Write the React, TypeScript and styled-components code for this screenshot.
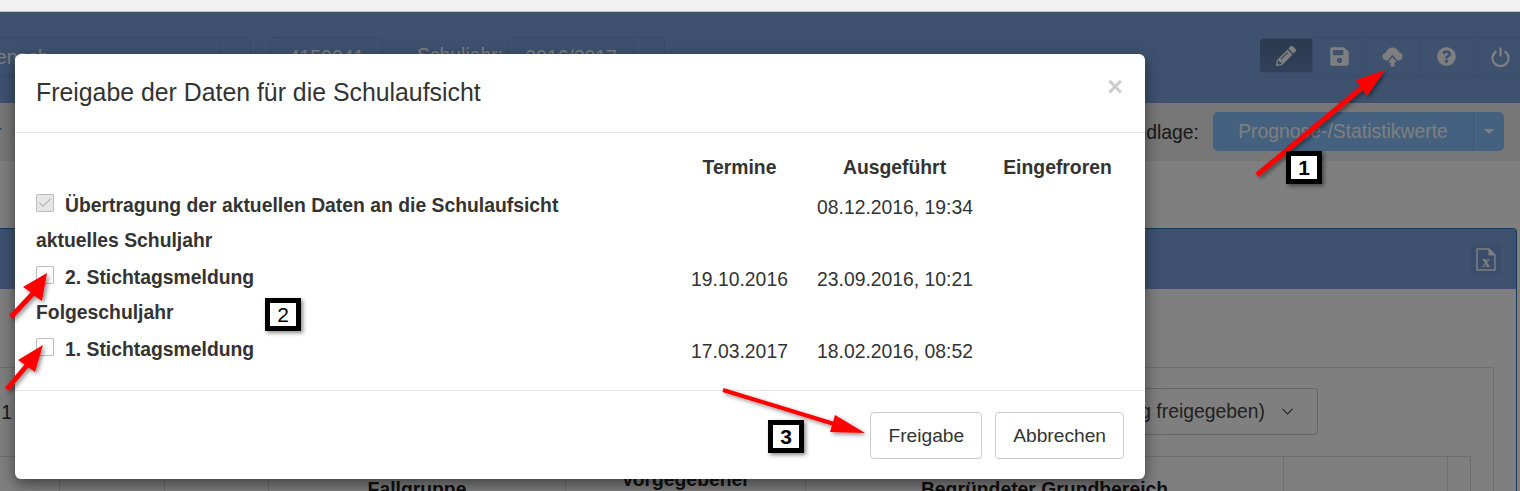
import { Check, ChevronDown } from "lucide-react";
import { FaPencilAlt, FaQuestionCircle, FaSave } from "react-icons/fa";
import styled, { createGlobalStyle } from "styled-components";

const GlobalStyle = createGlobalStyle`
  html, body {
    margin: 0;
    padding: 0;
    background: #ffffff;
    overflow: hidden;
  }
  * {
    box-sizing: border-box;
  }
  body {
    font-family: "Liberation Sans", Arial, sans-serif;
    font-size: 19.35px;
    color: #333333;
  }
`;

const rows = [
  { kind: "check", label: "Übertragung der aktuellen Daten an die Schulaufsicht", date: "", done: "08.12.2016, 19:34", checked: true },
  { kind: "group", label: "aktuelles Schuljahr" },
  { kind: "check", label: "2. Stichtagsmeldung", date: "19.10.2016", done: "23.09.2016, 10:21", checked: false },
  { kind: "group", label: "Folgeschuljahr" },
  { kind: "check", label: "1. Stichtagsmeldung", date: "17.03.2017", done: "18.02.2016, 08:52", checked: false },
];

type Pt = [number, number];

const arrows: { tail: Pt; tip: Pt; wingA: Pt; wingB: Pt; width: number }[] = [
  { tail: [1257, 175], tip: [1385, 70], wingA: [1356, 80], wingB: [1367, 96], width: 5 },
  { tail: [11, 317], tip: [47, 273], wingA: [23, 287], wingB: [42, 301], width: 5 },
  { tail: [7, 389], tip: [43, 345], wingA: [18, 360], wingB: [35, 372], width: 5 },
  { tail: [723, 390], tip: [865, 433], wingA: [835, 415], wingB: [830, 432], width: 4 },
];

// shaft plus head, the shaft ends on the middle of the two wing points
function arrowPoints({ tail, tip, wingA, wingB, width }: (typeof arrows)[number]) {
  const base: Pt = [(wingA[0] + wingB[0]) / 2, (wingA[1] + wingB[1]) / 2];
  const dx = base[0] - tail[0];
  const dy = base[1] - tail[1];
  const len = Math.hypot(dx, dy);
  const ox = (-dy / len) * (width / 2);
  const oy = (dx / len) * (width / 2);
  const side = (wingB[0] - base[0]) * ox + (wingB[1] - base[1]) * oy > 0 ? 1 : -1;
  const list: Pt[] = [
    [tail[0] - ox * side, tail[1] - oy * side],
    [base[0] - ox * side, base[1] - oy * side],
    wingA,
    tip,
    wingB,
    [base[0] + ox * side, base[1] + oy * side],
    [tail[0] + ox * side, tail[1] + oy * side],
  ];
  return list.map((p) => p.join(",")).join(" ");
}

export default function App() {
  return (
    <>
      <GlobalStyle />
      <BrowserStrip />
      <Frame>
        <Navbar>
          <NavField $width={293} $offset={-42}>
            <NavValue>Eisenach</NavValue>
            <NavAddon />
          </NavField>
          <NavField $width={113} $offset={19}>
            <NavValue $center>4150041</NavValue>
          </NavField>
          <NavLabel>Schuljahr:</NavLabel>
          <NavField $width={157} $offset={0}>
            <NavValue $center>2016/2017</NavValue>
            <NavAddon />
          </NavField>
          <Toolbar>
            <ToolButton $active>
              <FaPencilAlt size={20} />
            </ToolButton>
            <ToolButton>
              <FaSave size={21} />
            </ToolButton>
            <ToolButton>
              <CloudUp />
            </ToolButton>
            <ToolButton>
              <FaQuestionCircle size={19} />
            </ToolButton>
            <ToolButton $last>
              <PowerIcon />
            </ToolButton>
          </Toolbar>
        </Navbar>
        <SubBar>
          <BackLink>r</BackLink>
          <SubLabel>Datengrundlage:</SubLabel>
          <SplitButton>
            <SplitMain>Prognose-/Statistikwerte</SplitMain>
            <SplitCaret>
              <Caret />
            </SplitCaret>
          </SplitButton>
        </SubBar>
        <Content>
          <Panel>
            <PanelHead>
              <ExportButton>
                <FileX />
              </ExportButton>
            </PanelHead>
            <PanelBody>
              <InnerBox>
                <FilterRow>
                  <RowNumber>1.1</RowNumber>
                  <SelectBox>
                    <span>Prognose (noch nicht endgültig freigegeben)</span>
                    <ChevronDown size={19} strokeWidth={1.4} />
                  </SelectBox>
                </FilterRow>
                <GridHead>
                  <HeadCell />
                  <HeadCell />
                  <HeadCell />
                  <HeadCell>Fallgruppe</HeadCell>
                  <HeadCell $raise>Vorgegebener</HeadCell>
                  <HeadCell>Begründeter Grundbereich</HeadCell>
                  <HeadCell />
                  <HeadCell />
                </GridHead>
              </InnerBox>
            </PanelBody>
          </Panel>
        </Content>
        <Backdrop />
        <Modal>
          <ModalHeader>
            <ModalTitle>Freigabe der Daten für die Schulaufsicht</ModalTitle>
            <CloseMark>×</CloseMark>
          </ModalHeader>
          <ModalBody>
            <ReleaseRow>
              <span />
              <ColumnTitle>Termine</ColumnTitle>
              <ColumnTitle>Ausgeführt</ColumnTitle>
              <ColumnTitle>Eingefroren</ColumnTitle>
            </ReleaseRow>
            {rows.map((row) =>
              row.kind === "group" ? (
                <GroupTitle key={row.label}>{row.label}</GroupTitle>
              ) : (
                <ReleaseRow key={row.label}>
                  <CheckLabel>
                    <CheckBox $checked={row.checked}>
                      {row.checked && <Check size={16} strokeWidth={1.5} />}
                    </CheckBox>
                    {row.label}
                  </CheckLabel>
                  <DateCell>{row.date}</DateCell>
                  <DateCell>{row.done}</DateCell>
                  <span />
                </ReleaseRow>
              )
            )}
          </ModalBody>
          <ModalFooter>
            <FooterButton>Freigabe</FooterButton>
            <FooterButton>Abbrechen</FooterButton>
          </ModalFooter>
        </Modal>
      </Frame>
      <ArrowLayer viewBox="0 0 1520 491">
        <defs>
          <filter id="arrowShadow" x="-20%" y="-20%" width="150%" height="150%">
            <feDropShadow dx="2" dy="2" stdDeviation="2" floodColor="#000" floodOpacity="0.45" />
          </filter>
        </defs>
        {arrows.map((arrow) => (
          <polygon key={arrow.tail.join()} points={arrowPoints(arrow)} fill="#ff0000" filter="url(#arrowShadow)" />
        ))}
      </ArrowLayer>
      <Marker $left={1286} $top={151}>1</Marker>
      <Marker $left={265} $top={298} $light>2</Marker>
      <Marker $left={768} $top={420}>3</Marker>
    </>
  );
}

function CloudUp() {
  return (
    <svg width="21" height="20" viewBox="0 0 21 20">
      <path
        d="M5 13.5C2.3 13.5 0.4 11.8 0.4 9.6 0.4 7.5 2 6 4 5.8 4.8 2.6 7.4 0.6 10.5 0.6c3 0 5.4 1.7 6.3 4.6 2.2 0.3 3.8 2 3.8 4.2 0 2.3-1.8 4.1-4.6 4.1H15.5L10.5 7.8 5.5 13.5z"
        fill="currentColor"
      />
      <path d="M10.5 10.2 15.2 15.2H12.4V19.6H8.6V15.2H5.8z" fill="currentColor" />
    </svg>
  );
}

function PowerIcon() {
  return (
    <svg width="19" height="20" viewBox="0 0 19 20" fill="none" stroke="currentColor" strokeWidth="2.2">
      <path d="M5.4 4.2A8 8 0 1 0 13.6 4.2" />
      <path d="M9.5 0.5V9.5" />
    </svg>
  );
}

function FileX() {
  return (
    <svg width="20" height="23" viewBox="0 0 20 23">
      <path d="M1 1H13L19 7V22H1z" fill="none" stroke="currentColor" strokeWidth="1.4" />
      <path d="M12.5 1V7.5H19z" fill="currentColor" />
      <text x="10" y="19" textAnchor="middle" fontSize="16" fontWeight="700" fontFamily="Liberation Serif, serif" fill="currentColor">
        x
      </text>
    </svg>
  );
}

const BrowserStrip = styled.div`
  position: relative;
  z-index: 5;
  height: 12px;
  background: #f1f1f1;
  border-bottom: 1px solid #c4c4c4;
`;

const Frame = styled.div`
  position: relative;
  height: 479px;
  overflow: hidden;
  background: #ffffff;
`;

const Navbar = styled.div`
  display: flex;
  align-items: flex-start;
  height: 91px;
  padding-top: 25px;
  background: #7ca4e0;
  color: #ffffff;
`;

const NavField = styled.div<{ $width: number; $offset: number }>`
  display: flex;
  flex: none;
  width: ${({ $width }) => $width}px;
  height: 40px;
  margin-left: ${({ $offset }) => $offset}px;
  border: 1px solid #7097d0;
  border-radius: 4px;
`;

const NavValue = styled.div<{ $center?: boolean }>`
  flex: 1;
  padding: 8px 10px;
  line-height: 22px;
  color: #ffffff;
  text-align: ${({ $center }) => ($center ? "center" : "left")};
`;

const NavAddon = styled.div`
  flex: none;
  width: 31px;
  border-left: 1px solid #7097d0;
`;

const NavLabel = styled.div`
  flex: none;
  margin: 7px 5px 0 34px;
  line-height: 22px;
  color: #ffffff;
`;

const Toolbar = styled.div`
  display: flex;
  flex: none;
  margin-left: auto;
  margin-right: -7px;
  height: 39px;
`;

const ToolButton = styled.div<{ $active?: boolean; $last?: boolean }>`
  display: flex;
  align-items: center;
  justify-content: center;
  flex: none;
  width: 53.5px;
  height: ${({ $active }) => ($active ? "35px" : "39px")};
  margin-top: ${({ $active }) => ($active ? "1px" : "0")};
  padding-left: ${({ $last }) => ($last ? "2px" : "0")};
  border: 1px solid #7097d0;
  border-left: none;
  border-radius: ${({ $active }) => ($active ? "4px 0 0 4px" : "0")};
  background: ${({ $active }) => ($active ? "linear-gradient(180deg, #58749f, #6483b4)" : "transparent")};
  color: #ffffff;
`;

const SubBar = styled.div`
  display: flex;
  align-items: center;
  height: 58px;
  padding: 0 16px 0 0;
  background: #eeeeee;
`;

const BackLink = styled.span`
  color: #3f7fc4;
  margin-left: -5px;
`;

const SubLabel = styled.span`
  margin-left: auto;
  margin-right: 14px;
  color: #333333;
`;

const SplitButton = styled.div`
  display: flex;
  width: 291px;
  height: 39px;
  margin-top: -1px;
  border-radius: 5px;
  overflow: hidden;
  background: #88c2ff;
  color: #ffffff;
`;

const SplitMain = styled.div`
  display: flex;
  flex: 1;
  align-items: center;
  justify-content: center;
`;

const SplitCaret = styled.div`
  display: flex;
  align-items: center;
  justify-content: center;
  width: 31px;
  border-left: 1px solid #7ca8e8;
`;

const Caret = styled.span`
  width: 0;
  height: 0;
  border-left: 5px solid transparent;
  border-right: 5px solid transparent;
  border-top: 5px solid #ffffff;
`;

const Content = styled.div`
  padding: 67px 3px 0 0;
  background: #ffffff;
`;

const Panel = styled.div`
  border: 1px solid #2f6fa8;
  border-width: 1px 1px 0 0;
  border-radius: 0 4px 0 0;
`;

const PanelHead = styled.div`
  display: flex;
  align-items: flex-start;
  justify-content: flex-end;
  height: 60px;
  padding: 16px 15px 0 0;
  background: #7ca4e0;
`;

const ExportButton = styled.div`
  display: flex;
  align-items: center;
  justify-content: center;
  width: 30px;
  height: 29px;
  border-radius: 4px;
  background: #759cd6;
  color: #ffffff;
`;

const PanelBody = styled.div`
  padding: 78px 22px 0 0;
`;

const InnerBox = styled.div`
  border: 1px solid #dddddd;
  border-left: none;
  height: 140px;
`;

const FilterRow = styled.div`
  display: flex;
  justify-content: space-between;
  height: 88px;
  padding: 20px 175px 0 0;
`;

const RowNumber = styled.span`
  margin-left: -15px;
  padding-top: 13px;
  color: #333333;
`;

const SelectBox = styled.div`
  display: flex;
  align-items: center;
  justify-content: flex-end;
  gap: 13px;
  width: 560px;
  height: 47px;
  padding-right: 20px;
  border: 1px solid #cccccc;
  border-radius: 4px;
  white-space: nowrap;
  color: #444444;
`;

const GridHead = styled.div`
  display: grid;
  grid-template-columns: 60px 105px 104px 297px 240px 478px 164px 23px;
  height: 40px;
  margin-right: 22px;
  border-top: 1px solid #dddddd;
`;

const HeadCell = styled.div<{ $raise?: boolean }>`
  padding-top: ${({ $raise }) => ($raise ? "12px" : "22px")};
  font-weight: 700;
  line-height: 20px;
  text-align: center;
  white-space: nowrap;
  color: #222222;
  border-right: 1px solid #dddddd;
`;

const Backdrop = styled.div`
  position: absolute;
  inset: 0;
  background: rgba(0, 0, 0, 0.5);
`;

const Modal = styled.div`
  position: absolute;
  left: 15px;
  top: 42px;
  display: flex;
  flex-direction: column;
  width: 1130px;
  height: 425px;
  background: #ffffff;
  border-radius: 6px;
  box-shadow: 0 5px 15px rgba(0, 0, 0, 0.5);
`;

const ModalHeader = styled.div`
  display: flex;
  align-items: center;
  justify-content: space-between;
  flex: none;
  height: 79px;
  padding: 0 21px;
  border-bottom: 1px solid #e5e5e5;
`;

const ModalTitle = styled.h4`
  margin: 0;
  font-size: 24.85px;
  font-weight: 400;
  color: #333333;
`;

const CloseMark = styled.span`
  margin-top: -12px;
  margin-right: 1px;
  font-size: 27px;
  font-weight: 700;
  line-height: 1;
  color: #000000;
  opacity: 0.2;
`;

const ModalBody = styled.div`
  flex: 1;
  padding: 15px 21px 0;
`;

const ReleaseRow = styled.div`
  display: grid;
  grid-template-columns: 1fr 155px 155px 171px;
  align-items: center;
  height: 38px;
  margin-right: -19px;
  white-space: nowrap;
`;

const ColumnTitle = styled.div`
  padding-top: 1px;
  font-weight: 700;
  text-align: center;
`;

const CheckLabel = styled.div`
  display: flex;
  align-items: center;
  gap: 11px;
  font-weight: 700;
`;

const CheckBox = styled.span<{ $checked: boolean }>`
  display: inline-flex;
  align-items: center;
  justify-content: center;
  flex: none;
  width: 18px;
  height: 18px;
  margin-top: -4px;
  border: 1px solid #bdbdbd;
  border-radius: 1px;
  background: ${({ $checked }) => ($checked ? "#e6e6e6" : "#ffffff")};
  color: #9a9a9a;
`;

const DateCell = styled.div`
  padding-top: 5px;
  text-align: center;
`;

const GroupTitle = styled.div`
  height: 34px;
  font-weight: 700;
  line-height: 32px;
`;

const ModalFooter = styled.div`
  display: flex;
  align-items: flex-start;
  justify-content: flex-end;
  gap: 13px;
  flex: none;
  height: 89px;
  padding: 21px 21px 0 0;
  border-top: 1px solid #e5e5e5;
`;

const FooterButton = styled.button`
  height: 47px;
  padding: 0 17px;
  font-family: inherit;
  font-size: 19.2px;
  color: #333333;
  background: #ffffff;
  border: 1px solid #cccccc;
  border-radius: 4px;
`;

const ArrowLayer = styled.svg`
  position: absolute;
  left: 0;
  top: 0;
  width: 1520px;
  height: 491px;
  pointer-events: none;
`;

const Marker = styled.div<{ $left: number; $top: number; $light?: boolean }>`
  position: absolute;
  left: ${({ $left }) => $left}px;
  top: ${({ $top }) => $top}px;
  width: 36px;
  height: 33px;
  border: 5px solid #000000;
  background: #ffffff;
  box-shadow: 2px 2px 4px rgba(0, 0, 0, 0.45);
  font-size: 21px;
  font-weight: ${({ $light }) => ($light ? 400 : 700)};
  line-height: 23px;
  text-align: center;
  color: #000000;
`;
